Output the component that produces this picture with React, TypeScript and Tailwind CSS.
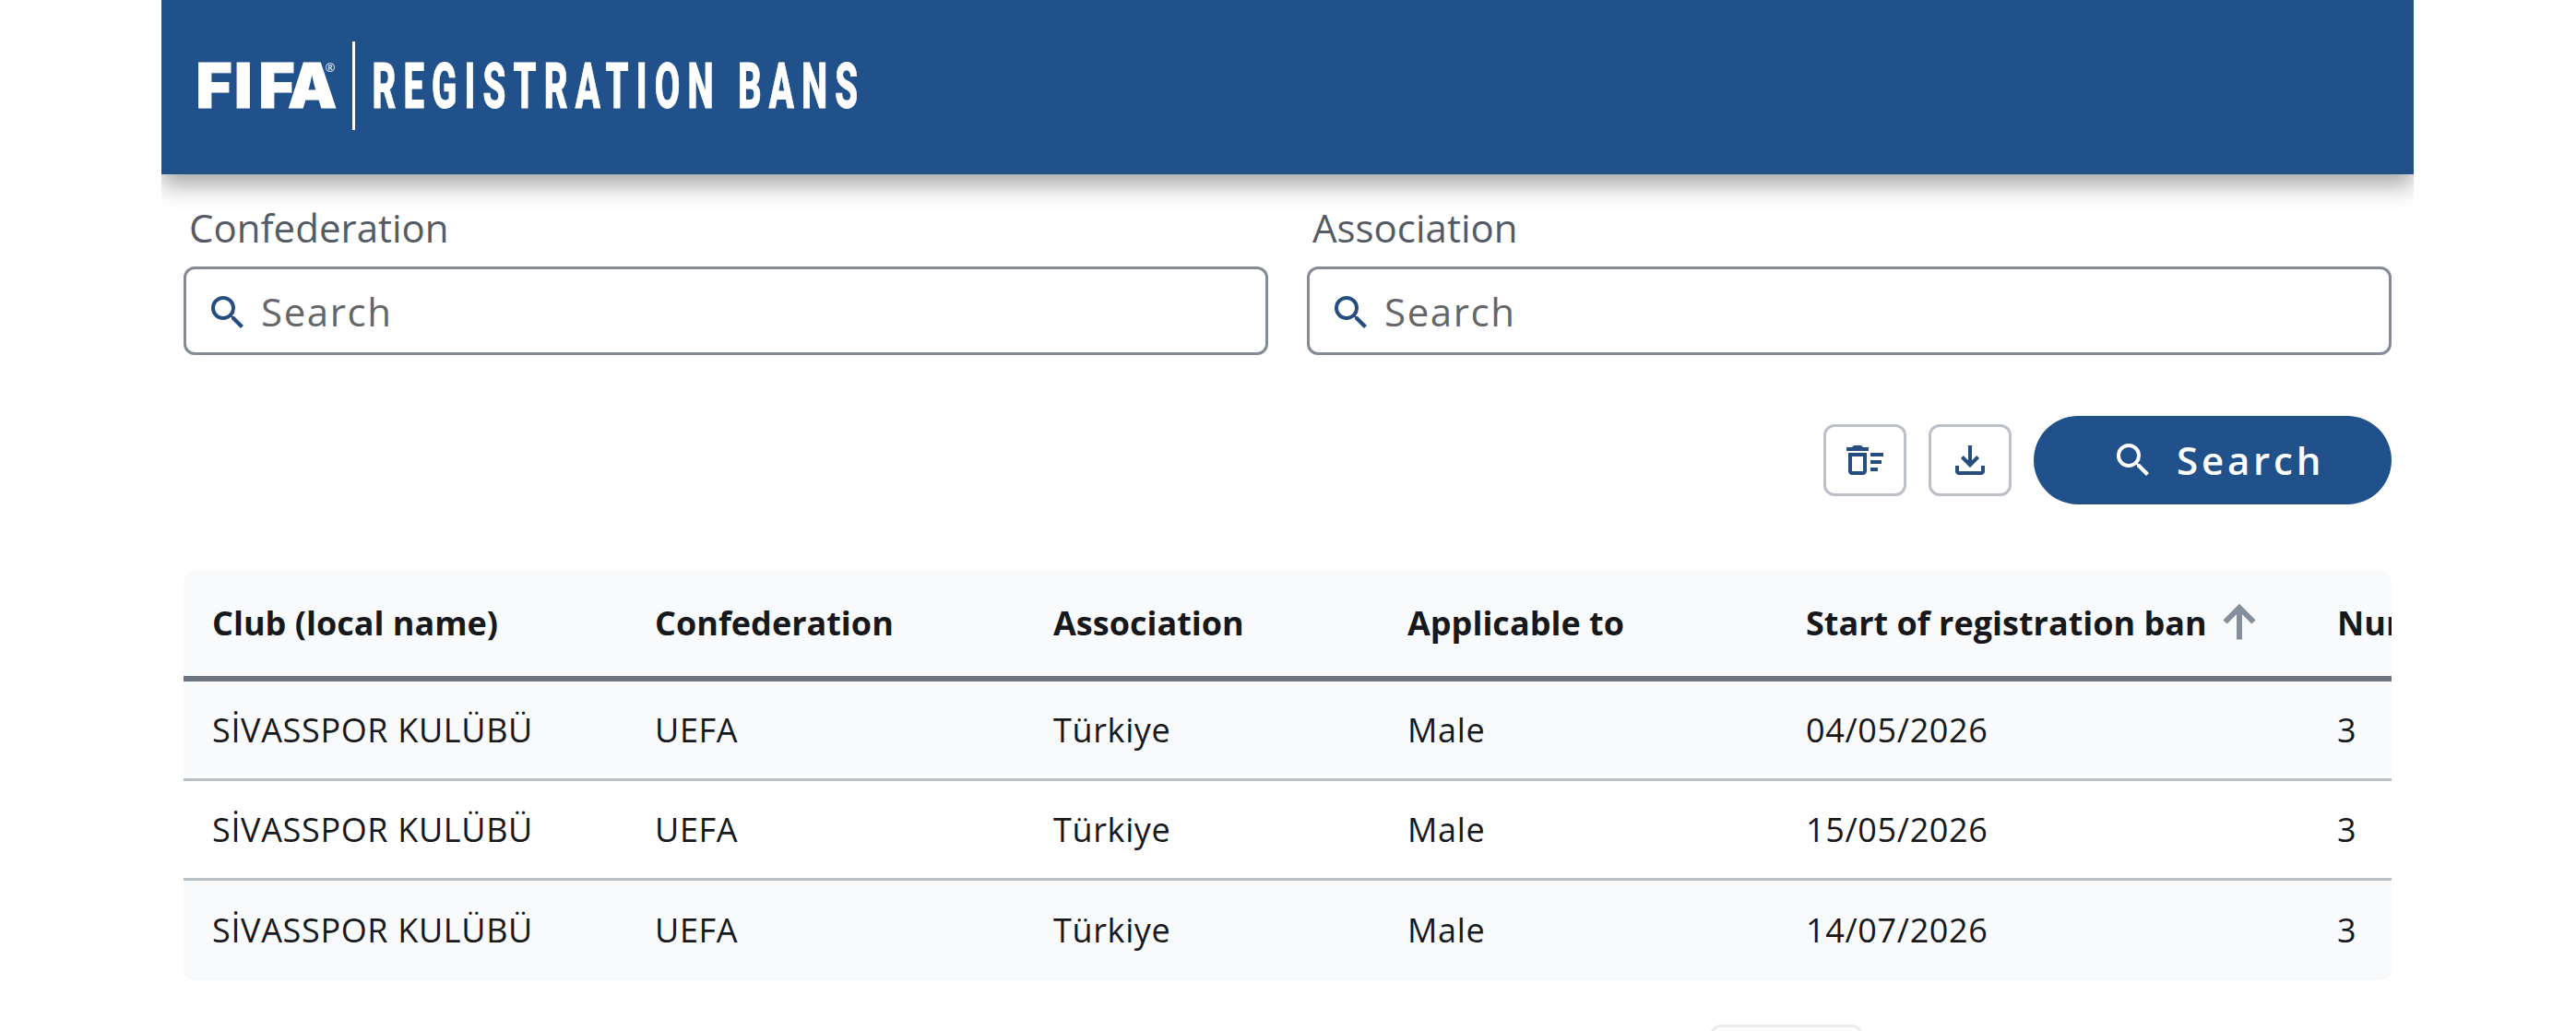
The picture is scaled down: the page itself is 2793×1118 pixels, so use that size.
type IconProps = {
  path: string;
  className: string;
};

type Ban = {
  club: string;
  confederation: string;
  association: string;
  applicableTo: string;
  start: string;
  periods: string;
};

const icons = {
  search:
    "M15.5 14h-.79l-.28-.27A6.471 6.471 0 0 0 16 9.5 6.5 6.5 0 1 0 9.5 16c1.61 0 3.09-.59 4.23-1.57l.27.28v.79l5 4.99L20.49 19l-4.99-5zm-6 0C7.01 14 5 11.99 5 9.5S7.01 5 9.5 5 14 7.01 14 9.5 11.99 14 9.5 14z",
  clear:
    "M15 16h4v2h-4v-2zm0-8h7v2h-7V8zm0 4h6v2h-6v-2zM3 18c0 1.100.9 2 2 2h6c1.100 0 2-.9 2-2V8H3v10zm2-8h6v8H5v-8zm5-6H6L5 5H2v2h12V5h-3l-1-1z",
  download:
    "M12 16l-5-5 1.400-1.450 2.600 2.600V4h2v8.150l2.600-2.600L17 11l-5 5zm-6 4q-.825 0-1.412-.587T4 18v-3h2v3h12v-3h2v3q0 .825-.587 1.413T18 20H6z",
};

const columns = [
  "Club (local name)",
  "Confederation",
  "Association",
  "Applicable to",
  "Start of registration ban",
  "Number of registration periods",
];

const club = {
  club: "SİVASSPOR KULÜBÜ",
  confederation: "UEFA",
  association: "Türkiye",
  applicableTo: "Male",
  periods: "3",
};

const bans: Ban[] = [
  { ...club, start: "04/05/2026" },
  { ...club, start: "15/05/2026" },
  { ...club, start: "14/07/2026" },
];

const gridColumns = "grid w-[2736px] grid-cols-[480px_432px_384px_432px_576px_432px]";

function Icon({ path, className }: IconProps) {
  return (
    <svg viewBox="0 0 24 24" fill="currentColor" aria-hidden="true" className={className}>
      <path d={path} />
    </svg>
  );
}

function SortArrow() {
  return (
    <svg
      viewBox="0 0 36 40"
      fill="none"
      stroke="currentColor"
      strokeWidth="6"
      aria-hidden="true"
      className="mb-1 ml-[17px] h-10 w-9 text-[#848f9c]"
    >
      <path d="M18 39.500V5M2.500 20.500L18 5l15.500 15.500" />
    </svg>
  );
}

function Header() {
  return (
    <header className="flex h-[189px] items-center bg-[#20518b] pb-[3px] pl-10 shadow-[0_12px_24px_rgba(0,0,0,0.35)]">
      <svg
        viewBox="0 0 720 96"
        role="img"
        aria-label="FIFA Registration Bans"
        className="h-24 w-[720px] overflow-visible fill-white"
      >
        <text
          x="-2.500 39 65.500 97"
          y="71.500"
          className="stroke-white stroke-1 font-['Inter'] text-[67px] font-black"
        >
          FIFA
        </text>
        <text x="137.500" y="33" className="font-['Open_Sans'] text-[13px]">
          ®
        </text>
        <rect x="167" y="0" width="3" height="96" />
        <text
          transform="translate(188.5 71.500) scale(0.58 1)"
          textLength="908"
          className="stroke-white stroke-1 font-['Roboto'] text-[69px] font-extrabold"
        >
          REGISTRATION BANS
        </text>
      </svg>
    </header>
  );
}

function SearchField({ label }: { label: string }) {
  return (
    <div>
      <p className="h-[72px] pl-1.5 text-[42px] leading-[60px] text-[#555b65]">{label}</p>
      <div className="flex h-24 items-center rounded-xl border-3 border-[#848b96] pl-[21px]">
        <Icon path={icons.search} className="mt-1 size-12 text-[#264d80]" />
        <input
          placeholder="Search"
          className="ml-3 w-[600px] text-[42px] tracking-[1.6px] outline-none placeholder:text-[#666666]"
        />
      </div>
    </div>
  );
}

function IconButton({ path, label }: { path: string; label: string }) {
  return (
    <button
      aria-label={label}
      className="flex h-[78px] w-[90px] items-center justify-center rounded-xl border-3 border-[#bcc0c8] text-[#264d80]"
    >
      <Icon path={path} className="size-12" />
    </button>
  );
}

function BansTable() {
  return (
    <div className="mt-[72px] h-[444px] overflow-hidden rounded-xl text-[36px] text-[#16181b]">
      <div className={`${gridColumns} h-[120px] items-center border-b-6 border-[#6b7480] bg-[#f9fafc] font-bold`}>
        {columns.map((column, index) => (
          <div key={column} className="flex items-center pl-[31px] whitespace-nowrap">
            {column}
            {index === 4 && <SortArrow />}
          </div>
        ))}
      </div>
      {bans.map((ban) => (
        <div
          key={ban.start}
          className={`${gridColumns} h-[108px] items-center border-b-3 border-[#b9bfc6] tracking-[0.65px] odd:bg-white even:bg-[#f9fafc] last:border-b-0`}
        >
          {[ban.club, ban.confederation, ban.association, ban.applicableTo, ban.start, ban.periods].map((value) => (
            <div key={value} className="pl-[31px] whitespace-nowrap">
              {value}
            </div>
          ))}
        </div>
      ))}
    </div>
  );
}

export default function App() {
  return (
    <div className="h-[1118px] overflow-hidden bg-white font-['Open_Sans',sans-serif]">
      <main className="ml-[175px] h-full w-[2442px] overflow-hidden">
        <Header />
        <div className="px-6 pt-7">
          <section className="grid grid-cols-2 gap-[42px]">
            <SearchField label="Confederation" />
            <SearchField label="Association" />
          </section>
          <div className="mt-[66px] flex items-center justify-end gap-6">
            <IconButton path={icons.clear} label="Clear filters" />
            <IconButton path={icons.download} label="Download" />
            <button className="flex h-24 w-[388px] items-center gap-[23px] rounded-full bg-[#20518b] pl-[84px] text-[42px] font-semibold tracking-[3.8px] text-white">
              <Icon path={icons.search} className="size-12" />
              <span className="pb-0.5">Search</span>
            </button>
          </div>
          <BansTable />
          <div className="mt-12 ml-[1655px] h-24 w-[166px] rounded-xl border-3 border-[#e9ecef]" />
        </div>
      </main>
    </div>
  );
}
